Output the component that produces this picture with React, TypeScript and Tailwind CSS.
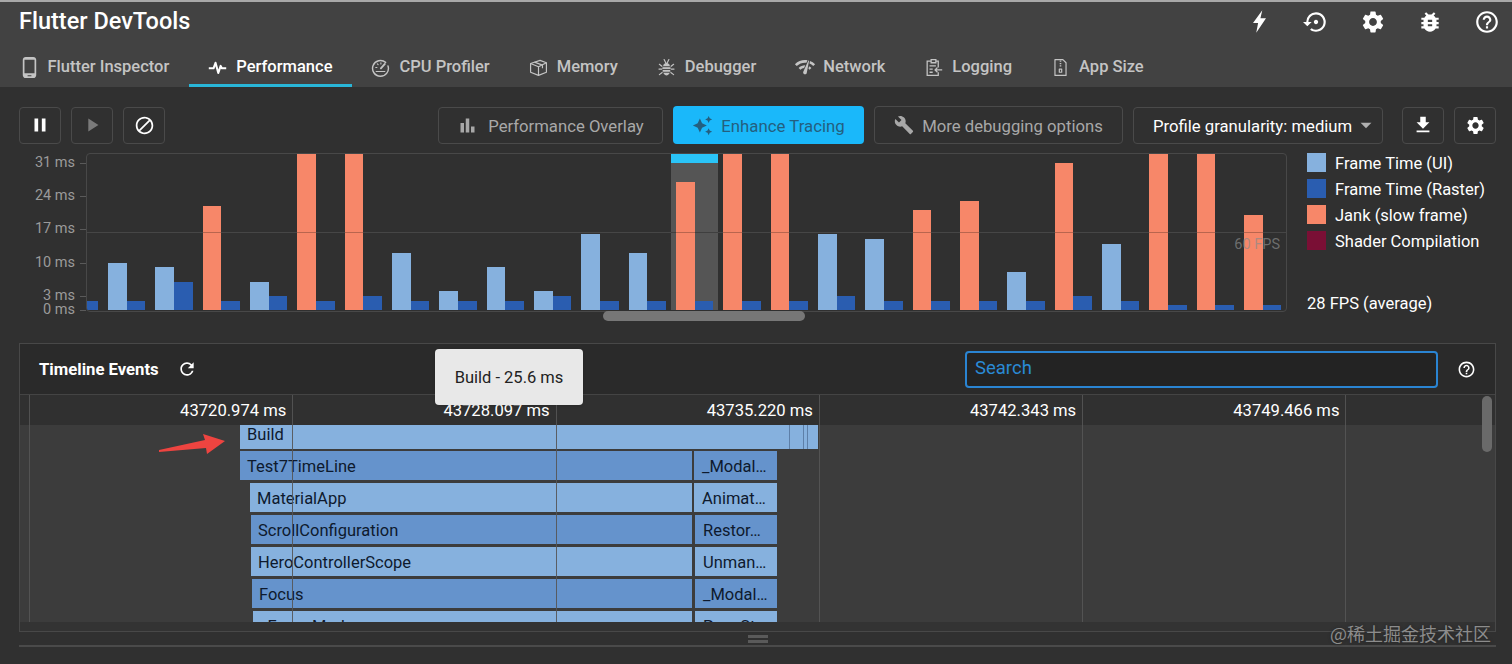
import {
  MdBlock,
  MdBugReport,
  MdBuild,
  MdArrowDropDown,
  MdAutoAwesome,
  MdBarChart,
  MdHelpOutline,
  MdNetworkCheck,
  MdPause,
  MdPhoneAndroid,
  MdPlayArrow,
  MdRefresh,
  MdSettingsBackupRestore,
  MdSettings,
  MdFileDownload,
} from 'react-icons/md';

const PulseIcon = ({ className }: { className?: string }) => (
  <svg viewBox="0 0 24 24" className={className} fill="none" stroke="currentColor" strokeWidth="2.6" strokeLinejoin="round">
    <path d="M1 13h6l2.5-7 3.5 13 3-9 1.5 3H23" />
  </svg>
);

const GaugeIcon = ({ className }: { className?: string }) => (
  <svg viewBox="0 0 24 24" className={className} fill="none" stroke="currentColor" strokeWidth="1.8" strokeLinecap="round">
    <path d="M18.5 5.5A10 10 0 1 0 21.5 10" />
    <path d="M17.5 7.5l-5 5.5" strokeWidth="2.4" />
    <path d="M6 12h1.5M8 7.5l1 1M12.5 6v1.5M6.5 17h11" strokeWidth="1.4" />
  </svg>
);

const BoxIcon = ({ className }: { className?: string }) => (
  <svg viewBox="0 0 24 24" className={className} fill="none" stroke="currentColor" strokeWidth="1.5" strokeLinejoin="round">
    <path d="M2 7l12-4 8 3v12l-10 4-10-4z" />
    <path d="M2 7l10 4 10-5M12 11v11M7 5.2l10 3.8v4" />
  </svg>
);

const StripedBugIcon = ({ className }: { className?: string }) => (
  <svg viewBox="0 0 24 24" className={className} fill="none" stroke="currentColor" strokeWidth="1.5" strokeLinecap="round">
    <ellipse cx="12" cy="14" rx="5" ry="8" fill="currentColor" stroke="none" />
    <path d="M9 2l2 4M15 2l-2 4M3 8l4 3M21 8l-4 3M2.5 14H7M21.5 14H17M3 21l4-3M21 21l-4-3" />
    <path d="M7 11h10M7 14.5h10M7.5 18h9" stroke="#424242" strokeWidth="1.2" />
  </svg>
);

const LogIcon = ({ className }: { className?: string }) => (
  <svg viewBox="0 0 24 24" className={className} fill="none" stroke="currentColor" strokeWidth="1.6">
    <path d="M9 4H4v18h14v-4M15 4h3v8" />
    <path d="M9 2h6v4H9zM7 10h8M7 14h4M7 18h4M23 15h-9m3-3l-3 3 3 3" />
  </svg>
);

const ZipIcon = ({ className }: { className?: string }) => (
  <svg viewBox="0 0 24 24" className={className} fill="none" stroke="currentColor" strokeWidth="1.5" strokeLinejoin="round">
    <path d="M5 2h10l4 4v16H5z" />
    <path d="M11 4h2M11 7h2M11 10h2M10.5 14h3v4h-3z" />
  </svg>
);

const BoltIcon = ({ className }: { className?: string }) => (
  <svg viewBox="0 0 14 24" className={className} fill="currentColor">
    <path d="M10 0L0 13.5h5.5L3.5 24 14 8.5H8z" />
  </svg>
);

const tabs = [
  { name: 'Flutter Inspector', icon: MdPhoneAndroid, iconClass: 'size-[23px] -mx-[2px]' },
  { name: 'Performance', icon: PulseIcon, iconClass: 'size-[19px]', active: true },
  { name: 'CPU Profiler', icon: GaugeIcon, iconClass: 'size-[19px]' },
  { name: 'Memory', icon: BoxIcon, iconClass: 'size-[19px]' },
  { name: 'Debugger', icon: StripedBugIcon, iconClass: 'size-[19px]' },
  { name: 'Network', icon: MdNetworkCheck, iconClass: 'size-[22px] -mx-[1.5px]' },
  { name: 'Logging', icon: LogIcon, iconClass: 'size-[19px]' },
  { name: 'App Size', icon: ZipIcon, iconClass: 'size-[19px]' },
];

// top y of each bar in page pixels, chart floor is y=310
const frames = [
  { top: 263, raster: 301 },
  { top: 267, raster: 282 },
  { top: 206, raster: 301, jank: true },
  { top: 282, raster: 296 },
  { top: 154, raster: 301, jank: true },
  { top: 154, raster: 296, jank: true },
  { top: 253, raster: 301 },
  { top: 291, raster: 301 },
  { top: 267, raster: 301 },
  { top: 291, raster: 296 },
  { top: 234, raster: 301 },
  { top: 253, raster: 301 },
  { top: 182, raster: 301, jank: true, selected: true },
  { top: 154, raster: 301, jank: true },
  { top: 154, raster: 301, jank: true },
  { top: 234, raster: 296 },
  { top: 239, raster: 301 },
  { top: 210, raster: 301, jank: true },
  { top: 201, raster: 301, jank: true },
  { top: 272, raster: 301 },
  { top: 163, raster: 296, jank: true },
  { top: 244, raster: 301 },
  { top: 154, raster: 305, jank: true },
  { top: 154, raster: 305, jank: true },
  { top: 215, raster: 305, jank: true },
];

const axis = [
  { label: '31 ms', y: 1 },
  { label: '24 ms', y: 34 },
  { label: '17 ms', y: 67 },
  { label: '10 ms', y: 101 },
  { label: '3 ms', y: 134 },
  { label: '0 ms', y: 148 },
];

const legend = [
  { name: 'Frame Time (UI)', color: 'bg-[#86b1de]' },
  { name: 'Frame Time (Raster)', color: 'bg-[#2a5db0]' },
  { name: 'Jank (slow frame)', color: 'bg-[#f78769]' },
  { name: 'Shader Compilation', color: 'bg-[#7a0f35]' },
];

const flameRows = [
  { y: 26, x: 220, w: 452, name: 'Test7TimeLine', side: '_Modal…', sideX: 674, sideW: 83, dark: true },
  { y: 58, x: 230, w: 442, name: 'MaterialApp', side: 'Animat…', sideX: 674, sideW: 83 },
  { y: 90, x: 231, w: 441, name: 'ScrollConfiguration', side: 'Restor…', sideX: 675, sideW: 82, dark: true },
  { y: 122, x: 231, w: 441, name: 'HeroControllerScope', side: 'Unman…', sideX: 675, sideW: 82 },
  { y: 154, x: 232, w: 440, name: 'Focus', side: '_Modal…', sideX: 675, sideW: 82, dark: true },
  { y: 186, x: 233, w: 439, name: '_FocusMarker', side: 'PageSt…', sideX: 675, sideW: 82 },
];

const ruler = ['43720.974 ms', '43728.097 ms', '43735.220 ms', '43742.343 ms', '43749.466 ms'];

const IconButton = ({ children }: { children: React.ReactNode }) => (
  <button className="flex h-[37px] w-[42px] items-center justify-center rounded border border-[#4a4a4a] text-white">
    {children}
  </button>
);

const App = () => {
  return (
    <div className="h-[664px] w-[1512px] overflow-hidden bg-[#303030] font-[family-name:Roboto,sans-serif] text-white">
      {/* Header */}
      <header className="h-[87px] border-t-2 border-[#a8a8a8] bg-[#424242]">
        <div className="flex h-[39px] items-center justify-between pl-[19px] pr-[12px]">
          <h1 className="text-[23.5px] font-medium leading-none">Flutter DevTools</h1>
          <div className="flex items-center gap-[31px]">
            <div className="flex size-[26px] items-center justify-center">
              <BoltIcon className="h-[23px] w-[13px]" />
            </div>
            <MdSettingsBackupRestore className="size-[26px]" />
            <MdSettings className="size-[26px]" />
            <MdBugReport className="size-[26px]" />
            <MdHelpOutline className="size-[26px]" />
          </div>
        </div>
        <nav className="flex h-[46px]">
          {tabs.map((tab) => (
            <div
              key={tab.name}
              className={`flex items-center gap-[9px] px-[19.5px] pt-[9px] text-[16.5px] font-medium ${
                tab.active ? 'border-b-[3px] border-[#29b6d8] text-white' : 'border-b-[3px] border-transparent text-[#c4c4c4]'
              }`}
            >
              <tab.icon className={tab.iconClass} />
              <span>{tab.name}</span>
            </div>
          ))}
        </nav>
      </header>

      {/* Toolbar */}
      <div className="flex items-center pl-[19px] pr-[16px] pt-[19px]">
        <div className="flex gap-[10px]">
          <IconButton>
            <MdPause className="size-[22px]" />
          </IconButton>
          <IconButton>
            <MdPlayArrow className="size-[22px] text-[#7a7a7a]" />
          </IconButton>
          <IconButton>
            <MdBlock className="size-[21px]" />
          </IconButton>
        </div>
        <div className="ml-auto flex items-center gap-[10px]">
          <button className="flex h-[37px] w-[225px] items-center justify-center gap-[10px] rounded border border-[#4a4a4a] pt-[3px] text-[16.7px] text-[#a8a8a8]">
            <MdBarChart className="-mt-[3px] size-[21px]" />
            Performance Overlay
          </button>
          <button className="flex h-[38px] w-[191px] items-center justify-center gap-[8px] rounded bg-[#1ab8fa] pt-[3px] text-[16.8px] text-[#245f7f]">
            <MdAutoAwesome className="-mt-[3px] size-[21px]" />
            Enhance Tracing
          </button>
          <button className="flex h-[38px] w-[249px] items-center justify-center gap-[8px] rounded border border-[#4a4a4a] pt-[3px] text-[16.7px] text-[#a8a8a8]">
            <MdBuild className="-mt-[3px] size-[20px]" />
            More debugging options
          </button>
          <button className="flex h-[37px] w-[250px] items-center gap-px rounded border border-[#4a4a4a] pl-[19px] pt-[3px] text-[16.7px] text-white">
            Profile granularity: medium
            <MdArrowDropDown className="-mt-[3px] size-[26px] text-[#b0b0b0]" />
          </button>
          <div className="ml-[9px] flex gap-[10px]">
            <IconButton>
              <MdFileDownload className="size-[22px]" />
            </IconButton>
            <IconButton>
              <MdSettings className="size-[21px]" />
            </IconButton>
          </div>
        </div>
      </div>

      {/* Frames chart */}
      <section className="mt-[9px] flex h-[190px] items-start">
        <div className="relative h-[159px] w-[86px] shrink-0">
          {axis.map((tick) => (
            <div key={tick.label} className="absolute right-0 flex items-center" style={{ top: tick.y }}>
              <span className="text-[14.5px] leading-[18px] text-[#9a9a9a]">{tick.label}</span>
              <span className="ml-[5px] h-px w-[6px] bg-[#5a5a5a]" />
            </div>
          ))}
        </div>
        <div className="relative flex h-[159px] w-[1201px] shrink-0 items-end overflow-hidden rounded border border-[#484848] pb-px">
          {/* 60 FPS line: the pale part runs behind the bars, the dark part over them */}
          <div className="absolute inset-x-0 top-[78px] h-px bg-[#5e5e5e]" />
          <div className="relative flex h-full w-[16px] shrink-0 items-end">
            <div className="h-[9px] w-[11px] bg-[#2a5db0]" />
          </div>
          {frames.map((frame, i) => (
            <div
              key={i}
              className={`relative flex h-full w-[47.33px] shrink-0 items-end px-[5px] ${frame.selected ? 'bg-[#555555]' : ''}`}
            >
              {frame.selected && <div className="absolute inset-x-0 top-0 h-[9px] bg-[#2ac4f7]" />}
              <div
                className={`w-[19px] ${frame.jank ? 'bg-[#f78769]' : 'bg-[#86b1de]'}`}
                style={{ height: 310 - frame.top }}
              />
              <div className="w-[19px] bg-[#2a5db0]" style={{ height: 310 - frame.raster }} />
            </div>
          ))}
          <div className="absolute inset-x-0 top-[78px] h-px bg-black/25" />
          <span className="absolute right-[6px] top-[80px] text-[14.5px] text-[#8a8a8a]/70">60 FPS</span>
        </div>
        <aside className="ml-[20px] flex h-[159px] flex-1 flex-col justify-between text-[16.5px]">
          <div className="flex flex-col gap-[7px]">
            {legend.map((item) => (
              <div key={item.name} className="flex h-[19px] items-center gap-[9px] whitespace-nowrap">
                <span className={`size-[19px] shrink-0 ${item.color}`} />
                <span className="pt-[4px]">{item.name}</span>
              </div>
            ))}
          </div>
          <div className="mb-[-5px] whitespace-nowrap">28 FPS (average)</div>
        </aside>
      </section>

      {/* Timeline events */}
      <div className="absolute left-[603px] top-[311px] h-[10px] w-[202px] rounded-full bg-[#777777]" />
      <section className="ml-[19px] mr-[16px] h-[288px] border-x border-t border-[#484848] bg-[#3c3c3c]">
        <div className="flex h-[51px] items-center border-b border-[#444444] bg-[#2a2a2a] pl-[19px] pr-[19px]">
          <span className="pt-[2px] text-[16.7px] font-bold">Timeline Events</span>
          <MdRefresh className="ml-[18px] size-[20px]" />
          <div className="ml-auto flex h-[37px] w-[473px] items-center rounded border-2 border-[#2a84d2] bg-[#232323] px-[8px] text-[18.5px] text-[#2a8ad5]">
            Search
          </div>
          <MdHelpOutline className="ml-[19px] size-[19px]" />
        </div>

        <div className="relative h-[236px] overflow-hidden">
          <div className="flex h-[30px] bg-[#303030] pl-[9px] pt-[3px]">
            {ruler.map((t) => (
              <div key={t} className="flex w-[263.3px] items-center justify-end pr-[6px] text-[16.6px]">
                {t}
              </div>
            ))}
          </div>

          {/* flame chart canvas */}
          <div className="absolute inset-x-0 bottom-[9px] top-[30px] overflow-hidden">
            <div className="absolute left-[220px] top-0 h-[24px] w-[578px] bg-[#86b1de] pl-[7px] text-[16.5px] leading-[19px] text-[#0e1a2e]">
              Build
            </div>
            <div className="absolute left-[769px] top-0 h-[24px] w-px bg-[#5d7fa8]" />
            <div className="absolute left-[783px] top-0 h-[24px] w-px bg-[#5d7fa8]" />
            <div className="absolute left-[787px] top-0 h-[24px] w-px bg-[#5d7fa8]" />
            {flameRows.map((row) => (
              <div key={row.name}>
                <div
                  className={`absolute h-[29px] pl-[7px] text-[16.5px] leading-[31px] text-[#0e1a2e] ${row.dark ? 'bg-[#6593cc]' : 'bg-[#86b1de]'}`}
                  style={{ top: row.y, left: row.x, width: row.w }}
                >
                  {row.name}
                </div>
                <div
                  className={`absolute h-[29px] pl-[8px] text-[16.5px] leading-[31px] text-[#0e1a2e] ${row.dark ? 'bg-[#6593cc]' : 'bg-[#86b1de]'}`}
                  style={{ top: row.y, left: row.sideX, width: row.sideW }}
                >
                  {row.side}
                </div>
              </div>
            ))}
          </div>

          {/* grid lines lie over the bars */}
          <div className="pointer-events-none absolute bottom-[9px] left-[9px] top-0 flex">
            {[0, 1, 2, 3, 4, 5].map((n) => (
              <div key={n} className="h-full w-[263.3px] border-l border-[#555555]/90" />
            ))}
          </div>
          <div className="absolute bottom-0 left-0 right-0 h-[9px] bg-[#333333]" />
          <div className="absolute right-[3px] top-[1px] h-[56px] w-[10px] rounded-full bg-[#6a6a6a]" />
        </div>
      </section>

      <div className="ml-[19px] mr-[16px] h-px bg-[#484848]" />
      <div className="ml-[19px] mr-[16px] flex h-[13px] items-center justify-center">
        <div className="flex w-[20px] flex-col gap-[2px]">
          <div className="h-[3px] bg-[#5a5a5a]" />
          <div className="h-[3px] bg-[#5a5a5a]" />
        </div>
      </div>
      <div className="ml-[19px] mr-[16px] h-[2px] bg-[#4a4a4a]" />

      {/* Red annotation arrow */}
      <svg className="absolute left-[150px] top-[425px] h-[40px] w-[90px]" viewBox="150 425 90 40">
        <polygon points="159,450 205,440 203,434 225,441 207,454 206,448 159,452" fill="#ee4440" />
      </svg>

      {/* Tooltip */}
      <div className="absolute left-[435px] top-[349px] flex h-[56px] w-[148px] items-center justify-center rounded bg-[#e8e8e8] pt-[3px] text-[16.5px] text-[#222222] shadow">
        Build - 25.6 ms
      </div>

      {/* Watermark */}
      <div className="absolute left-[1330px] top-[620px] font-[family-name:'Noto_Sans_CJK_SC',sans-serif] text-[18px] text-[#8c8c8c] [text-shadow:0_0_3px_#222]">
        @稀土掘金技术社区
      </div>
    </div>
  );
};

export default App;
